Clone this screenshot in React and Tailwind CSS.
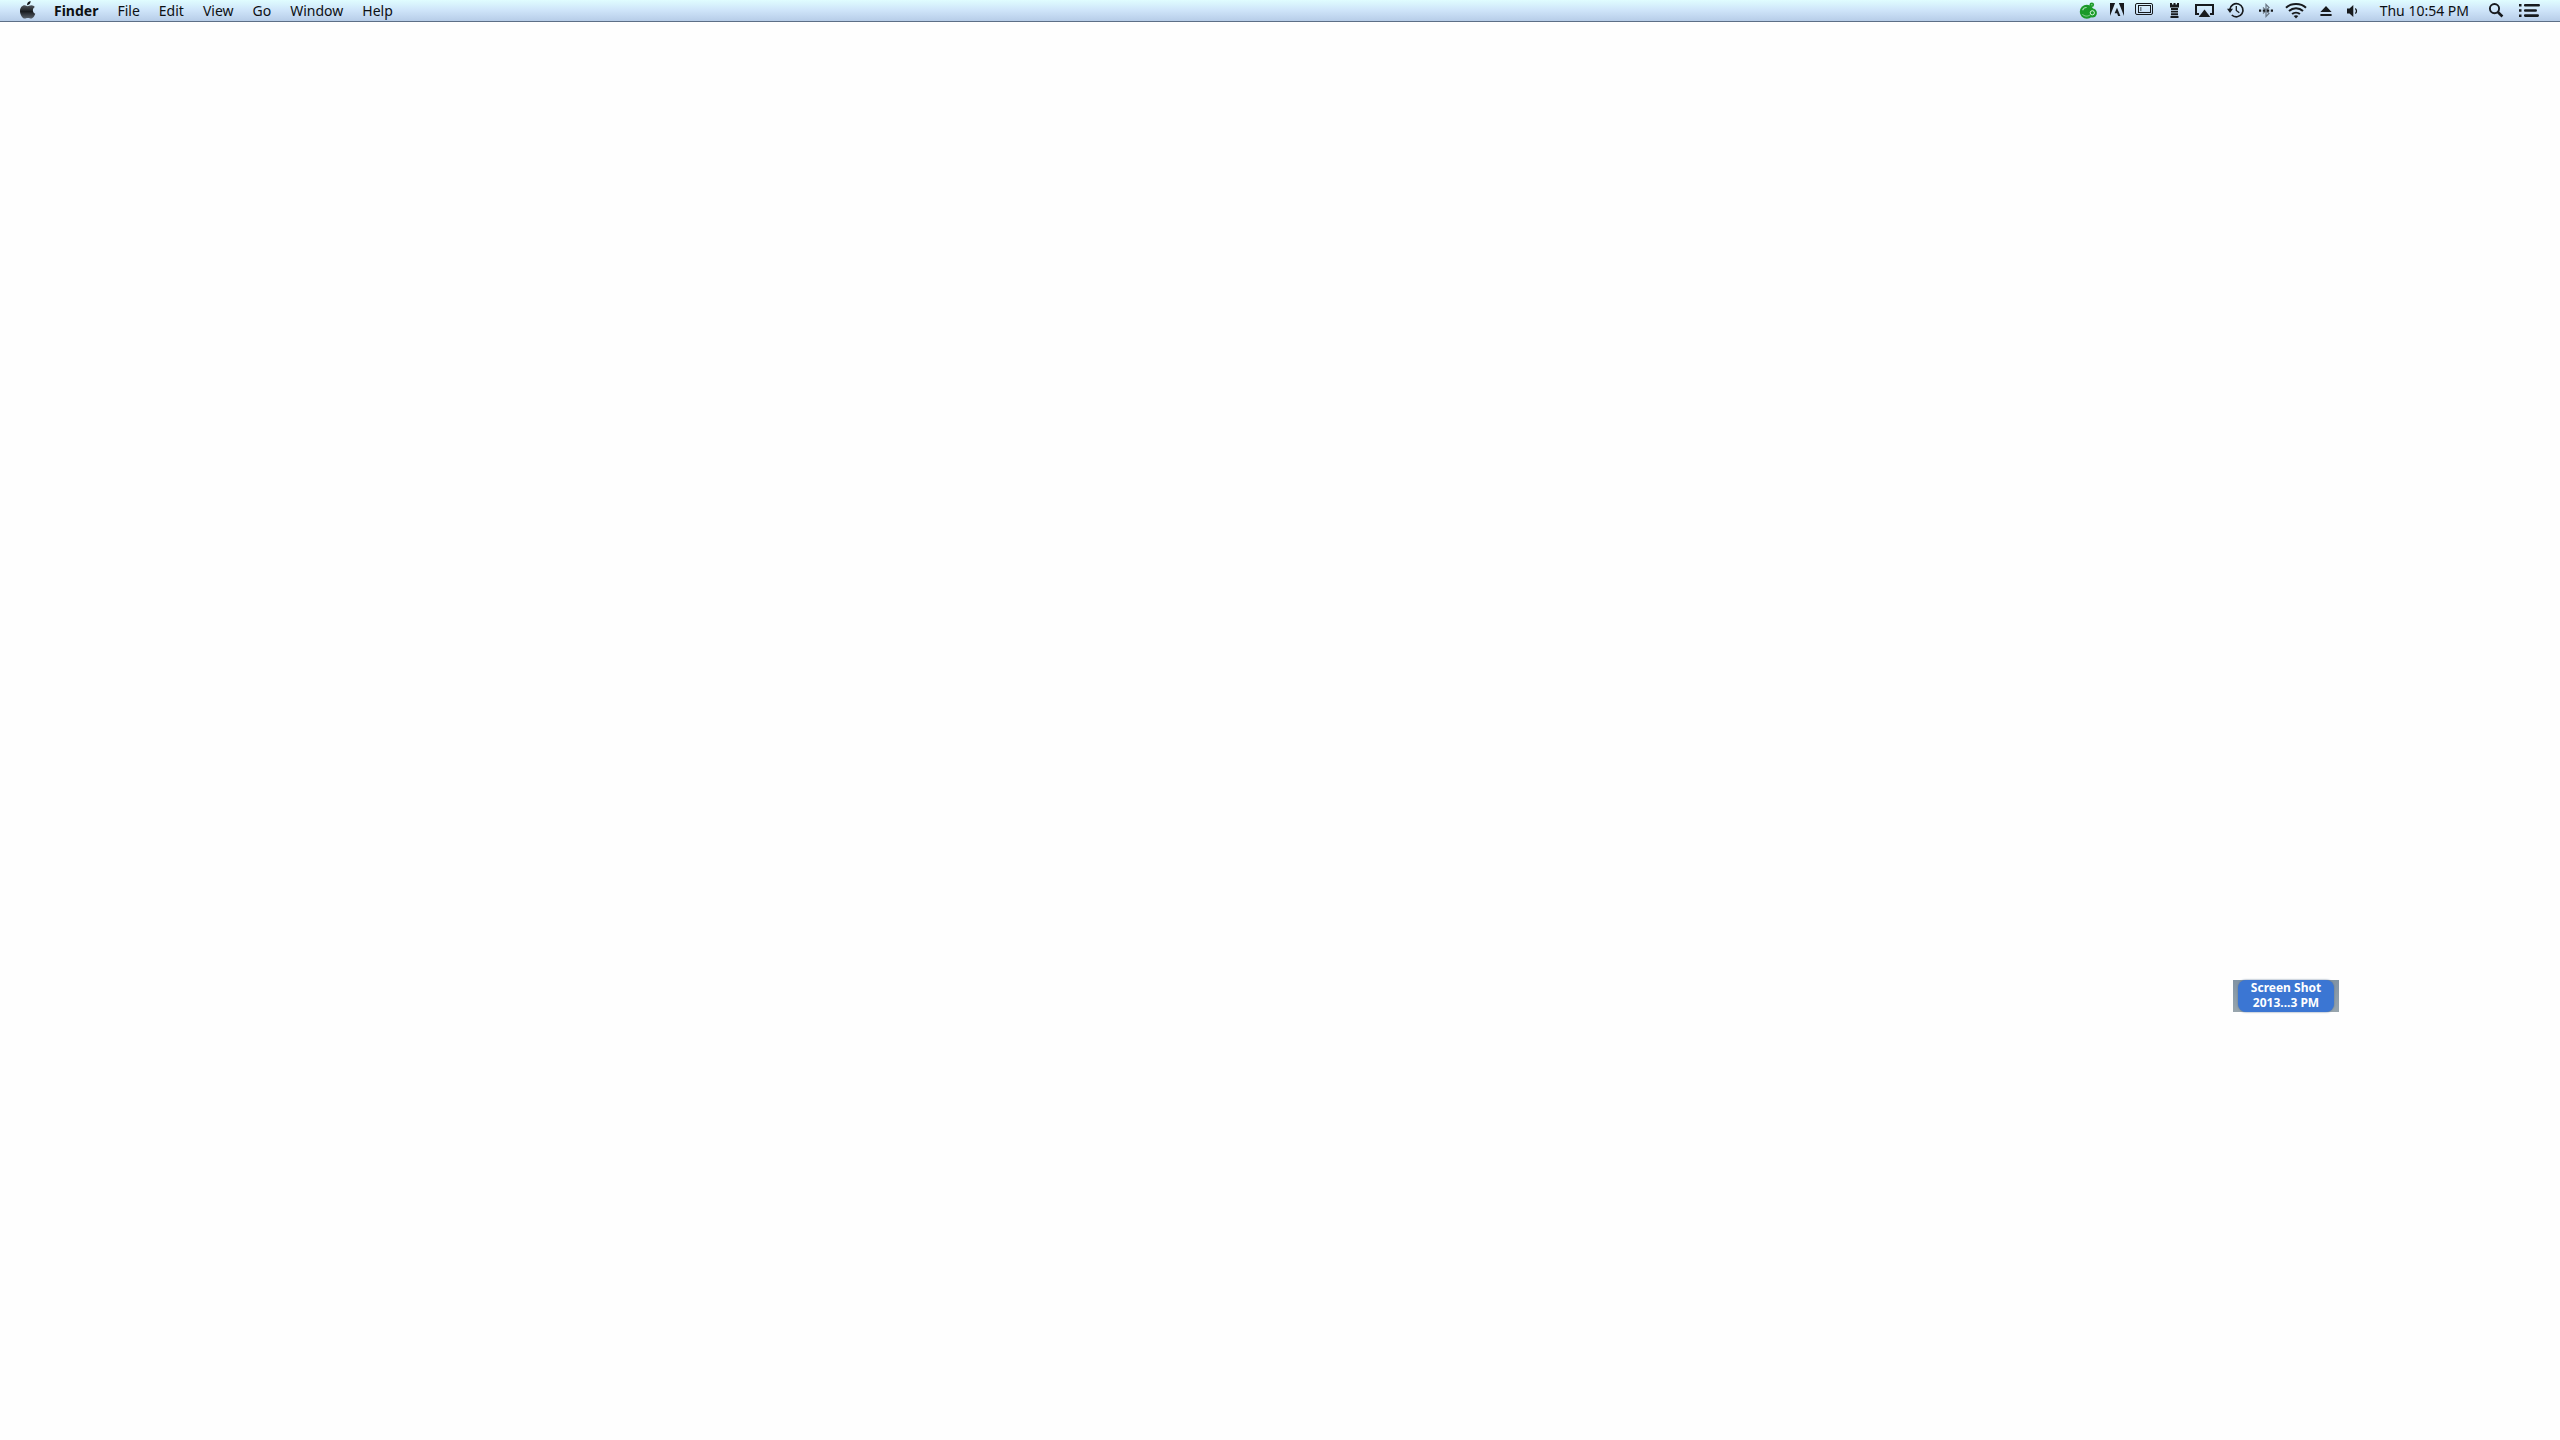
const menus = ["File", "Edit", "View", "Go", "Window", "Help"];

function StatusItem({ label, width, children }) {
  return (
    <button type="button" aria-label={label} className="flex h-full items-start">
      <svg width={width} height="21" viewBox={`0 0 ${width} 21`} fill="none" aria-hidden="true">
        {children}
      </svg>
    </button>
  );
}

function AppleMenu() {
  return (
    <StatusItem label="Apple menu" width={44}>
      <defs>
        <linearGradient id="appleFill" x1="0" y1="0" x2="0" y2="1">
          <stop offset="0" stopColor="#50565c" />
          <stop offset="0.5" stopColor="#15181b" />
          <stop offset="0.55" stopColor="#24282d" />
          <stop offset="1" stopColor="#59616a" />
        </linearGradient>
      </defs>
      <path d="M27 5.2C26.8 3 28.6 1.2 30.6 1C30.8 3.2 29.2 5.1 27 5.2Z" fill="#15181b" />
      <path
        d="M27.6 6.3C28.6 6.3 29.6 5.3 31.4 5.3C32.8 5.3 34 6 34.8 7.1C32 8.8 32.4 12.6 35.3 13.8C34.6 15.8 33 18.6 31.1 18.6C29.9 18.6 29.4 17.9 27.9 17.9C26.4 17.9 25.8 18.6 24.7 18.6C22.6 18.6 20 14.6 20 11.2C20 7.5 22.2 5.3 24.6 5.3C26 5.3 26.8 6.3 27.6 6.3Z"
        fill="url(#appleFill)"
      />
    </StatusItem>
  );
}

function StatusIcons() {
  return (
    <>
      <StatusItem label="Green orb" width={31}>
        <circle cx="14.8" cy="11.8" r="7" fill="#1a9a29" />
        <circle cx="20.3" cy="13" r="4.6" fill="#1a9a29" />
        <circle cx="19.8" cy="4.8" r="2.3" fill="#1a9a29" />
        <path d="M10.6 10.3C11.3 8.4 12.8 7.4 14.6 7.5" stroke="#a5deb0" strokeWidth="1.1" />
        <path d="M10.2 14C12.2 16.6 16 16.6 18 14.9" stroke="#7fce8c" />
        <circle cx="20.3" cy="12.8" r="2.1" stroke="#d8f7de" />
        <circle cx="19.8" cy="4.8" r="0.8" fill="#7ed08a" />
      </StatusItem>
      <StatusItem label="Adobe" width={27}>
        <path d="M7 3H12.1L7 16ZM15.9 3H21V16ZM14 7.7L17.4 16H15.1L14.1 13.3H11.6Z" fill="#171a1d" />
      </StatusItem>
      <StatusItem label="Displays" width={31}>
        <rect x="5.5" y="3.5" width="17" height="11" rx="1.5" stroke="#171a1d" />
        <rect x="8.5" y="5.5" width="12" height="7" stroke="#171a1d" />
        <path d="M10 8H11.5M10 10H11.5" stroke="#171a1d" />
      </StatusItem>
      <StatusItem label="Rook" width={27}>
        <path
          d="M9 3H11V4.5H12.5V3H14.5V4.5H16V3H18V7.5H9ZM10 8H17V10H10ZM10 10.7H17V12.6H10ZM10 13.3H17V15.2H10ZM9.5 15.9H17.5V18H9.5Z"
          fill="#171a1d"
        />
      </StatusItem>
      <StatusItem label="AirPlay" width={32}>
        <path d="M11 14H8V5H25V14H22" stroke="#171a1d" strokeWidth="2" />
        <path d="M16.5 9.5L22.3 17H10.7Z" fill="#171a1d" />
      </StatusItem>
      <StatusItem label="Time Machine" width={31}>
        <path d="M9.8 9.5A6.6 6.6 0 1 1 11.8 15" stroke="#171a1d" strokeWidth="1.7" />
        <path d="M7 8.8H13L10 13Z" fill="#171a1d" />
        <path d="M16.3 6V10.5L19.3 12.8" stroke="#171a1d" strokeWidth="1.3" />
      </StatusItem>
      <StatusItem label="Bluetooth" width={28}>
        <path d="M12 7.5L18 13.5L15 16.5V4.5L18 7.5L12 13.5" stroke="#6a7784" strokeWidth="1.2" />
        <path d="M8 9.5H10.2V11.7H8ZM11.8 9.5H14V11.7H11.8ZM16 9.5H18.2V11.7H16ZM19.8 9.5H22V11.7H19.8Z" fill="#171a1d" />
      </StatusItem>
      <StatusItem label="Wi-Fi" width={34}>
        <path d="M7 7.7C12.2 2.8 21.8 2.8 27 7.7M10 11C14 7.3 20 7.3 24 11M13.1 14.1C15.3 12.2 18.7 12.2 20.9 14.1" stroke="#171a1d" strokeWidth="2" />
        <path d="M14.7 16C16 14.9 18 14.9 19.3 16L17 18.4Z" fill="#171a1d" />
      </StatusItem>
      <StatusItem label="Eject" width={26}>
        <path d="M13 6L18.6 12H7.4ZM7.4 14H18.6V16H7.4Z" fill="#171a1d" />
      </StatusItem>
      <StatusItem label="Volume" width={27}>
        <path d="M8 8.5H10.5L14.3 5V17L10.5 13.5H8Z" fill="#171a1d" />
        <path d="M16.3 8.4C17.9 9.8 17.9 12.2 16.3 13.6" stroke="#171a1d" strokeWidth="1.3" />
      </StatusItem>
    </>
  );
}

function MenuBar() {
  return (
    <header className="flex h-[22px] items-stretch justify-between border-b border-[#5d6f87] bg-linear-to-b from-[#e0fdff] via-[#cee4f9] to-[#b7cde8] text-sm leading-[21px] whitespace-nowrap text-[#0d1013]">
      <nav aria-label="Menu bar" className="flex">
        <AppleMenu />
        <button type="button" className="px-2.5 font-bold">
          Finder
        </button>
        {menus.map((name) => (
          <button type="button" key={name} className="pr-2.5 pl-[9px]">
            {name}
          </button>
        ))}
      </nav>
      <div className="flex">
        <StatusIcons />
        <button type="button" className="pr-[11px] pl-3.5">
          Thu 10:54 PM
        </button>
        <StatusItem label="Spotlight" width={32}>
          <circle cx="14.5" cy="8.6" r="4.6" stroke="#171a1d" strokeWidth="1.9" />
          <path d="M17.8 12L22.4 16.5" stroke="#171a1d" strokeWidth="2.6" />
        </StatusItem>
        <StatusItem label="Notification Center" width={48}>
          <path d="M7 4H9.5V6.5H7ZM7 9.2H9.5V11.7H7ZM7 14.4H9.5V16.9H7Z" fill="#171a1d" />
          <path d="M13.2 5.3H26.7M13.2 10.5H23.7M13.2 15.6H25.7" stroke="#171a1d" strokeWidth="2.6" strokeLinecap="round" />
        </StatusItem>
      </div>
    </header>
  );
}

export default function App() {
  return (
    <div className="relative min-h-screen bg-[#fefefe] font-['Noto_Sans','Open_Sans',sans-serif]">
      <MenuBar />
      <main>
        <button
          type="button"
          className="absolute top-[980px] right-[221px] bg-linear-to-b from-[#8193a3] to-[#98a5ad] px-[5px] text-xs leading-[15px] font-bold text-white"
        >
          <span className="block w-24 rounded-lg bg-[#3b76d3] pb-0.5 shadow-[0_0_2px_#57708f]">
            Screen Shot
            <br />
            2013...3 PM
          </span>
        </button>
      </main>
    </div>
  );
}
